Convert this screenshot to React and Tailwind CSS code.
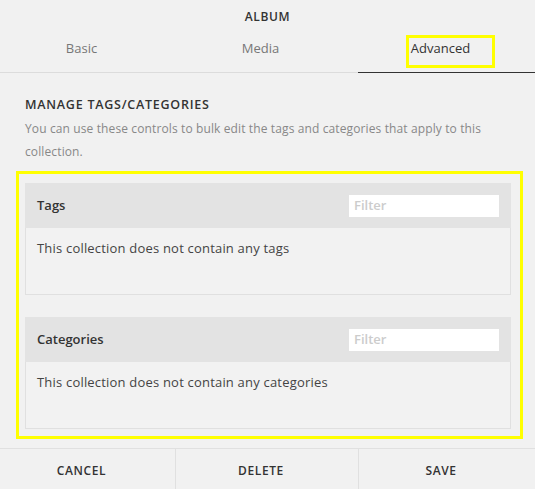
import React from "react";

function Panel({ title, empty }) {
  return (
    <div className="w-[486px] border border-[#e0e0e0] bg-[#f2f2f2]">
      <div className="h-[45px] -mx-px -mt-px bg-[#e3e3e3] flex items-center justify-between pl-[12px] pr-[12px]">
        <span className="text-[13px] text-[#333] font-semibold">{title}</span>
        <div className="w-[150px] h-[22px] bg-white flex items-center px-[5px] text-[13px] text-[#ccc] font-semibold">Filter</div>
      </div>
      <div className="h-[66px] pl-[11px] pt-[11px] text-[13px] tracking-[0.015em] text-[#444]">{empty}</div>
    </div>
  );
}

export default function App() {
  return (
    <div
      className="relative w-[535px] h-[489px] bg-[#f1f1f1] flex flex-col overflow-hidden"
      style={{ fontFamily: "'Open Sans', sans-serif" }}
    >
      <div className="h-[34px] flex items-center justify-center text-[12px] tracking-[0.05em] text-[#333] font-semibold">ALBUM</div>
      <div className="grid grid-cols-[175px_183px_177px] h-[39px] border-b border-[#dcdcdc] text-[13px]">
        <div className="flex items-center justify-center pr-[12px] pb-[8px] text-[#777]">Basic</div>
        <div className="flex items-center justify-center pr-[12px] pb-[8px] text-[#777]">Media</div>
        <div className="flex items-center justify-center pr-[12px] pb-[8px] text-[#333] border-b border-[#333] -mb-px">Advanced</div>
      </div>
      <div className="px-[25px] pt-[23px]">
        <div className="text-[12.5px] tracking-[0.06em] text-[#333] font-semibold leading-[18px]">MANAGE TAGS/CATEGORIES</div>
        <p className="mt-[3px] text-[12px] tracking-[0.01em] leading-[23px] text-[#888]">
          You can use these controls to bulk edit the tags and categories that apply to this collection.
        </p>
        <div className="mt-[20px] flex flex-col gap-[22px]">
          <Panel title="Tags" empty="This collection does not contain any tags" />
          <Panel title="Categories" empty="This collection does not contain any categories" />
        </div>
      </div>
      <div className="mt-auto h-[41px] border-t border-[#e0e0e0] grid grid-cols-[175px_183px_177px] text-[12px] tracking-[0.05em] text-[#333] font-semibold">
        <button className="flex items-center justify-center pr-[12px] pt-[3px]">CANCEL</button>
        <button className="flex items-center justify-center pr-[12px] pt-[3px] border-l border-[#e0e0e0]">DELETE</button>
        <button className="flex items-center justify-center pr-[12px] pt-[3px] border-l border-[#e0e0e0]">SAVE</button>
      </div>
      <div className="absolute left-[406px] top-[35px] w-[89px] h-[33px] border-[3px] border-[#ffff00] pointer-events-none" />
      <div className="absolute left-[16px] top-[171px] w-[507px] h-[268px] border-[3px] border-[#ffff00] pointer-events-none" />
    </div>
  );
}
